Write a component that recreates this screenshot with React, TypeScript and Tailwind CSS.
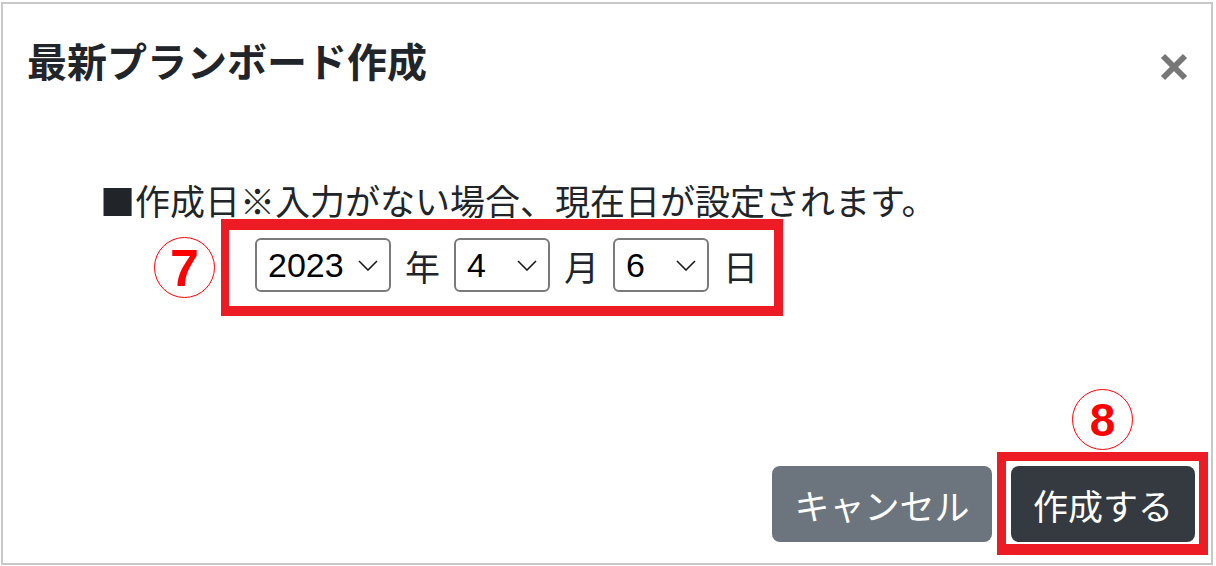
import React from "react";

const JP = "font-['Noto_Sans_CJK_JP','Noto_Sans',sans-serif]";

function Chevron() {
  return (
    <svg width="20" height="11" viewBox="0 0 20 11" fill="none">
      <polyline points="1,1 10,10 19,1" stroke="#1a1a1a" strokeWidth="1.6" />
    </svg>
  );
}

function FakeSelect({ value, width }: { value: string; width: string }) {
  return (
    <div
      className={`${width} h-[54px] flex items-center justify-between pl-[11px] pr-[11px] border-2 border-[#7a7a7a] rounded-[6px] bg-white`}
    >
      <span className="font-['Liberation_Sans',Arial,sans-serif] text-[34px] leading-none text-black">
        {value}
      </span>
      <Chevron />
    </div>
  );
}

function Circled({ n, size }: { n: string; size: string }) {
  return (
    <div className="w-[61px] h-[61px] shrink-0 rounded-full border-[1.5px] border-[#ff0000] flex items-center justify-center">
      <span className={`font-['Liberation_Sans',Arial,sans-serif] font-bold ${size} leading-none text-[#ff0000]`}>
        {n}
      </span>
    </div>
  );
}

export default function App() {
  return (
    <div className="w-[1216px] h-[566px] bg-white pt-[2px] pl-[1px]">
      <div className={`w-[1212px] h-[563px] border-2 border-[#c8c8c8] bg-white flex flex-col ${JP} text-[#212529]`}>
        {/* header */}
        <div className="flex justify-between items-start pl-[24px] pr-[23px] pt-[36px]">
          <h2 className="text-[40px] font-bold leading-none">最新プランボード作成</h2>
          <svg className="mt-[13px]" width="28" height="28" viewBox="0 0 28 28">
            <line x1="3" y1="3" x2="25" y2="25" stroke="#777777" strokeWidth="6" />
            <line x1="25" y1="3" x2="3" y2="25" stroke="#777777" strokeWidth="6" />
          </svg>
        </div>

        {/* body */}
        <div className="pl-[97px] pt-[101px]">
          <p className="text-[35px] leading-none">■作成日※入力がない場合、現在日が設定されます。</p>
          <div className="flex items-center mt-[2px] ml-[54px] gap-[6px]">
            <Circled n="7" size="text-[52px]" />
            <div className="flex items-center gap-[14px] border-[#ed1c24] border-l-[8px] border-r-[9px] border-t-[11px] border-b-[10px] pl-[26px] pr-[16px] pt-[8px] pb-[14px]">
              <FakeSelect value="2023" width="w-[136px]" />
              <span className="text-[35px] leading-none">年</span>
              <FakeSelect value="4" width="w-[96px]" />
              <span className="text-[35px] leading-none">月</span>
              <FakeSelect value="6" width="w-[96px]" />
              <span className="text-[35px] leading-none">日</span>
            </div>
          </div>
        </div>

        {/* footer */}
        <div className="mt-auto flex justify-end items-end gap-[5px] pr-[3px] pb-[8px]">
          <button className="w-[220px] h-[76px] mb-[13px] rounded-[8px] bg-[#6c757d] text-white text-[35px] leading-none flex items-center justify-center">
            キャンセル
          </button>
          <div className="flex flex-col items-center gap-[2px]">
            <Circled n="8" size="text-[46px]" />
            <div className="border-[9px] border-b-[11px] border-[#ed1c24] pl-[5px] pt-[5px] pr-[4px] pb-[2px]">
              <button className="w-[184px] h-[76px] rounded-[8px] bg-[#343a40] text-white text-[35px] leading-none flex items-center justify-center">
                作成する
              </button>
            </div>
          </div>
        </div>
      </div>
    </div>
  );
}
